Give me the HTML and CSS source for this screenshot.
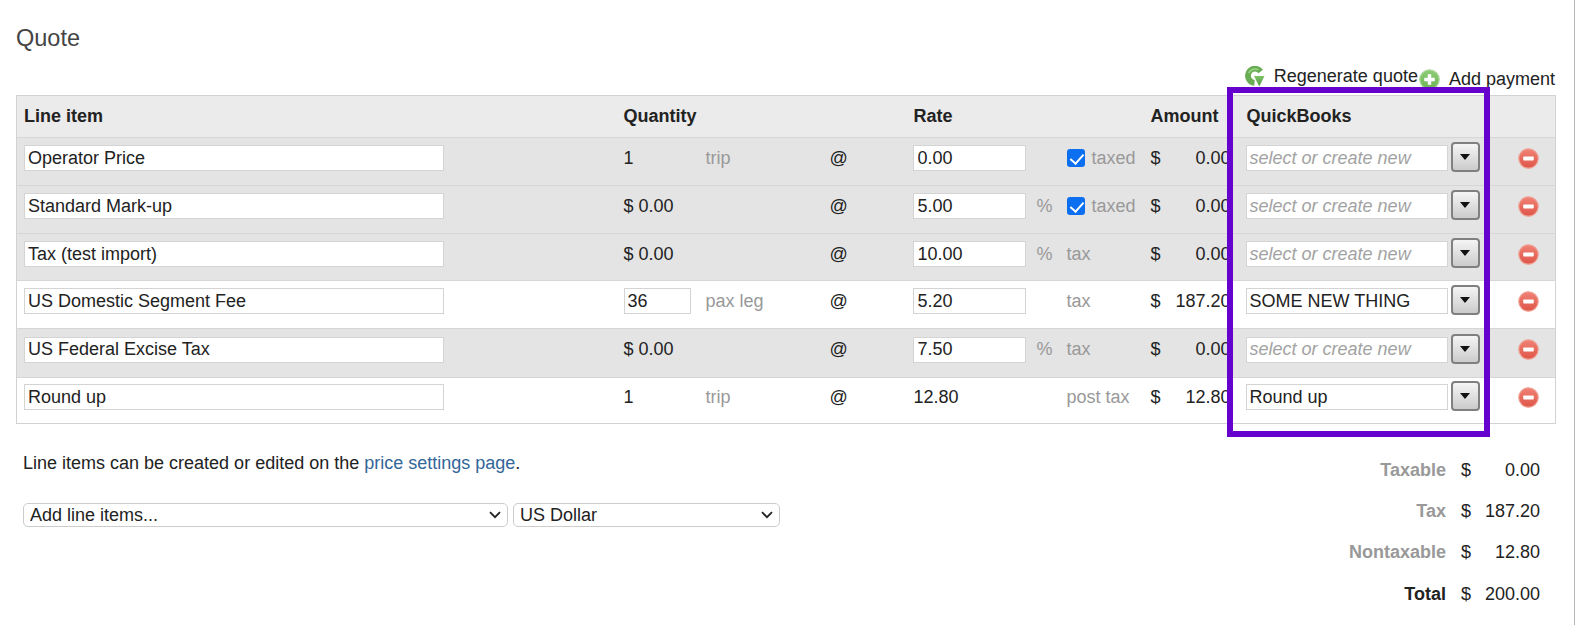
FILE: index.html
```html
<!DOCTYPE html>
<html lang="en">
<head>
<meta charset="utf-8">
<title>Quote</title>
<link rel="stylesheet" href="styles.css">
</head>
<body>
<svg class="defs" width="0" height="0" aria-hidden="true">
  <defs>
    <linearGradient id="redG" x1="0" y1="0" x2="0" y2="1"><stop offset="0" stop-color="#f08276"/><stop offset="1" stop-color="#de5547"/></linearGradient>
    <linearGradient id="greenG" x1="0" y1="0" x2="0" y2="1"><stop offset="0" stop-color="#8dcc77"/><stop offset="1" stop-color="#6cb455"/></linearGradient>
    <linearGradient id="regenG" x1="0" y1="0" x2="0" y2="1"><stop offset="0" stop-color="#7cc267"/><stop offset="1" stop-color="#549a42"/></linearGradient>
    <symbol id="del" viewBox="0 0 22 22"><circle cx="11" cy="11" r="10.2" fill="url(#redG)" stroke="#f0a196" stroke-width="1.3"/><rect x="5.5" y="9" width="11" height="4" rx=".8" fill="#fff"/></symbol>
    <symbol id="add" viewBox="0 0 22 22"><circle cx="11" cy="11" r="10.2" fill="url(#greenG)" stroke="#aed99b" stroke-width="1.3"/><path d="M9.2 5.5h3.6v3.7h3.7v3.6h-3.7v3.7H9.2v-3.7H5.5V9.2h3.7z" fill="#fff"/></symbol>
    <symbol id="regen" viewBox="0 0 22 22"><path d="M17.5 5.8A7.4 7.4 0 1 0 11 17.6" fill="none" stroke="#68ad54" stroke-width="6"/><path d="M5 7.5A7 7 0 0 1 15 4" fill="none" stroke="#94d080" stroke-width="2"/><path d="M10.5 10.5h11l-5.5 11z" fill="url(#regenG)"/></symbol>
    <symbol id="chev" viewBox="0 0 12 8"><path d="M1 1.2l5 5 5-5" fill="none" stroke="#222" stroke-width="1.8"/></symbol>
  </defs>
</svg>
<div class="page">
  <h1 class="title">Quote</h1>
  <div class="toolbar">
    <a class="tool regen"><svg class="tool-icon"><use href="#regen"/></svg><span>Regenerate quote</span></a>
    <a class="tool addpay"><svg class="tool-icon"><use href="#add"/></svg><span>Add payment</span></a>
  </div>
  <div class="table-wrap">
    <table class="quote">
      <colgroup>
        <col class="c-item"><col class="c-qty"><col class="c-unit"><col class="c-at"><col class="c-rate"><col class="c-pct"><col class="c-tax"><col class="c-cur"><col class="c-amt"><col class="c-qb"><col class="c-del">
      </colgroup>
      <thead>
        <tr><th class="first">Line item</th><th colspan="3">Quantity</th><th colspan="3">Rate</th><th colspan="2">Amount</th><th>QuickBooks</th><th></th></tr>
      </thead>
      <tbody>
        <tr class="shade">
          <td class="first"><input class="in in-item" value="Operator Price"></td>
          <td>1</td><td class="muted">trip</td><td>@</td>
          <td><input class="in in-rate" value="0.00"></td><td></td>
          <td class="muted"><label class="tax"><input type="checkbox" checked>taxed</label></td>
          <td>$</td><td class="amt">0.00</td>
          <td><div class="qb"><input class="in in-qb" placeholder="select or create new"><button class="drop"><i></i></button></div></td>
          <td class="del"><svg class="del-icon"><use href="#del"/></svg></td>
        </tr>
        <tr class="shade">
          <td class="first"><input class="in in-item" value="Standard Mark-up"></td>
          <td>$ 0.00</td><td class="muted"></td><td>@</td>
          <td><input class="in in-rate" value="5.00"></td><td class="muted">%</td>
          <td class="muted"><label class="tax"><input type="checkbox" checked>taxed</label></td>
          <td>$</td><td class="amt">0.00</td>
          <td><div class="qb"><input class="in in-qb" placeholder="select or create new"><button class="drop"><i></i></button></div></td>
          <td class="del"><svg class="del-icon"><use href="#del"/></svg></td>
        </tr>
        <tr class="shade short">
          <td class="first"><input class="in in-item" value="Tax (test import)"></td>
          <td>$ 0.00</td><td class="muted"></td><td>@</td>
          <td><input class="in in-rate" value="10.00"></td><td class="muted">%</td>
          <td class="muted">tax</td>
          <td>$</td><td class="amt">0.00</td>
          <td><div class="qb"><input class="in in-qb" placeholder="select or create new"><button class="drop"><i></i></button></div></td>
          <td class="del"><svg class="del-icon"><use href="#del"/></svg></td>
        </tr>
        <tr>
          <td class="first"><input class="in in-item" value="US Domestic Segment Fee"></td>
          <td><input class="in in-qty" value="36"></td><td class="muted">pax leg</td><td>@</td>
          <td><input class="in in-rate" value="5.20"></td><td></td>
          <td class="muted">tax</td>
          <td>$</td><td class="amt">187.20</td>
          <td><div class="qb"><input class="in in-qb" value="SOME NEW THING"><button class="drop"><i></i></button></div></td>
          <td class="del"><svg class="del-icon"><use href="#del"/></svg></td>
        </tr>
        <tr class="shade tall">
          <td class="first"><input class="in in-item" value="US Federal Excise Tax"></td>
          <td>$ 0.00</td><td class="muted"></td><td>@</td>
          <td><input class="in in-rate" value="7.50"></td><td class="muted">%</td>
          <td class="muted">tax</td>
          <td>$</td><td class="amt">0.00</td>
          <td><div class="qb"><input class="in in-qb" placeholder="select or create new"><button class="drop"><i></i></button></div></td>
          <td class="del"><svg class="del-icon"><use href="#del"/></svg></td>
        </tr>
        <tr class="last">
          <td class="first"><input class="in in-item" value="Round up"></td>
          <td>1</td><td class="muted">trip</td><td>@</td>
          <td>12.80</td><td></td>
          <td class="muted">post tax</td>
          <td>$</td><td class="amt">12.80</td>
          <td><div class="qb"><input class="in in-qb" value="Round up"><button class="drop"><i></i></button></div></td>
          <td class="del"><svg class="del-icon"><use href="#del"/></svg></td>
        </tr>
      </tbody>
    </table>
    <div class="highlight"></div>
  </div>
  <div class="bottom">
    <div class="notes">
      <p class="note">Line items can be created or edited on the <a class="link">price settings page</a>.</p>
      <div class="selects">
        <div class="sel-wrap sel-items"><select class="sel"><option>Add line items...</option></select><svg class="chev"><use href="#chev"/></svg></div>
        <div class="sel-wrap sel-cur"><select class="sel"><option>US Dollar</option></select><svg class="chev"><use href="#chev"/></svg></div>
      </div>
    </div>
    <div class="totals">
      <span class="t-label">Taxable</span><span class="t-cur">$</span><span class="t-val">0.00</span>
      <span class="t-label">Tax</span><span class="t-cur">$</span><span class="t-val">187.20</span>
      <span class="t-label">Nontaxable</span><span class="t-cur">$</span><span class="t-val">12.80</span>
      <span class="t-label total">Total</span><span class="t-cur">$</span><span class="t-val">200.00</span>
    </div>
  </div>
</div>
</body>
</html>
```
FILE: styles.css
```css
* { box-sizing: border-box; }
html, body { margin: 0; padding: 0; }
body { background: #fff; color: #222; font-family: "Liberation Sans", Arial, sans-serif; font-size: 18px; overflow: hidden; }
.defs { position: absolute; }
.page { width: 1575px; height: 625px; padding: 0 19px 0 16px; border-right: 1px solid #b5b5b5; overflow: hidden; }
.title { margin: 0; padding-top: 24px; height: 60px; font-size: 23.5px; line-height: 28px; font-weight: 400; color: #444; }
.toolbar { display: flex; justify-content: flex-end; height: 35px; gap: 1px; }
.tool { display: flex; align-items: flex-start; color: #222; font-size: 18px; }
.tool-icon { width: 21px; height: 21px; margin-right: 9px; flex: none; }
.regen { padding-top: 6px; }
.addpay { padding-top: 9px; }
.table-wrap { position: relative; }
.quote { width: 1539px; border-collapse: collapse; table-layout: fixed; border: 1px solid #d2d2d2; }
.c-item { width: 599px; } .c-qty { width: 82px; } .c-unit { width: 124px; } .c-at { width: 84px; }
.c-rate { width: 123px; } .c-pct { width: 30px; } .c-tax { width: 84px; } .c-cur { width: 28px; }
.c-amt { width: 68px; } .c-qb { width: 262px; } .c-del { width: 55px; }
th { background: #ebebeb; text-align: left; font-weight: 700; height: 42px; padding: 0 8px; border-bottom: 1px solid #d6d6d6; }
td { height: 48px; padding: 0 8px 7px; border-bottom: 1px solid #d6d6d6; white-space: nowrap; }
th.first, td.first { padding-left: 7px; }
.shade td { background: #e4e4e4; }
tr.short td { height: 47px; padding-bottom: 6px; }
tr.tall td { height: 49px; }
tr.last td { height: 46px; border-bottom: 0; }
.muted { color: #999; }
.amt { text-align: right; padding-right: 8px; padding-left: 0; }
.in { display: block; height: 26px; border: 1px solid #d4d4d4; background: #fff; color: #222; font: 18px "Liberation Sans", Arial, sans-serif; padding: 0 3px; outline: 0; }
.in::placeholder { color: #a2a2a2; font-style: italic; opacity: 1; }
.in-item { width: 420px; }
.in-rate { width: 113px; margin-left: -1px; padding-left: 4px; }
.in-qty { width: 67px; }
.in-qb { width: 202px; margin-left: -1px; }
.tax { display: flex; align-items: center; gap: 7px; }
.tax input { appearance: none; position: relative; flex: none; width: 18px; height: 18px; margin: 0; border-radius: 3px; background: #0b6ff0; }
.tax input::after { content: ""; position: absolute; left: 6px; top: 2px; width: 6px; height: 11px; border: solid #fff; border-width: 0 2.5px 2.5px 0; transform: rotate(42deg); }
.qb { display: flex; align-items: flex-start; gap: 3px; height: 26px; }
.drop { width: 29px; height: 30px; margin-top: -3px; padding: 0; flex: none; border: 2px solid #808080; border-radius: 4px; background: linear-gradient(#f5f5f5, #cbcbcb); display: flex; align-items: center; justify-content: center; }
.drop i { display: block; width: 0; height: 0; border-style: solid; border-width: 6px 5.5px 0; border-color: #111 transparent transparent; }
.del-icon { display: block; width: 21px; height: 21px; margin: 0 auto; position: relative; left: 1px; }
.highlight { position: absolute; left: 1211px; top: -8px; width: 263px; height: 350px; border: 6px solid #6600cc; pointer-events: none; }
.bottom { display: flex; justify-content: space-between; }
.notes { padding-left: 7px; }
.note { margin: 0; padding-top: 28px; line-height: 22px; }
.link { color: #336699; }
.selects { display: flex; gap: 5px; margin-top: 29px; }
.sel-wrap { position: relative; height: 24px; }
.sel-items { width: 485px; }
.sel-cur { width: 267px; }
.sel { display: block; width: 100%; height: 24px; appearance: none; border: 1px solid #ccc; border-radius: 5px; background: #fff; color: #222; font: 18px "Liberation Sans", Arial, sans-serif; padding: 0 6px; }
.chev { position: absolute; right: 7px; top: 8px; width: 12px; height: 8px; pointer-events: none; }
.totals { display: grid; grid-template-columns: auto 25px 69px; grid-auto-rows: 41.4px; align-items: center; padding-top: 25.5px; padding-right: 15px; }
.t-cur { padding-left: 15px; white-space: nowrap; }
.t-label { text-align: right; font-weight: 700; color: #999; }
.t-label.total { color: #222; }
.t-val { text-align: right; }
```
